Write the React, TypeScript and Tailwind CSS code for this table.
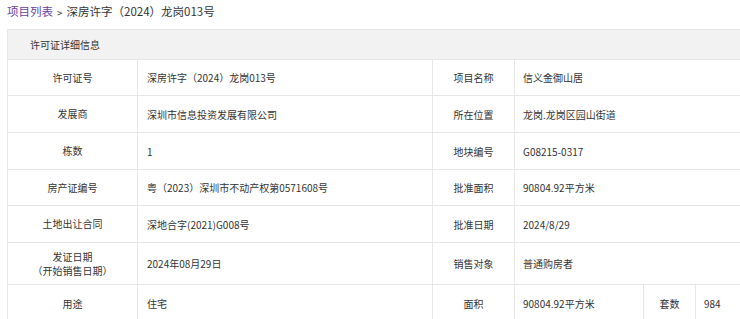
const font = { fontFamily: '"Microsoft YaHei", "Noto Sans CJK SC", "Noto Sans", sans-serif' }

const rows: { label: React.ReactNode; value: string; label2: string; value2: string; h: string }[] = [
  { label: '许可证号', value: '深房许字（2024）龙岗013号', label2: '项目名称', value2: '信义金御山居', h: 'h-[36px]' },
  { label: '发展商', value: '深圳市信息投资发展有限公司', label2: '所在位置', value2: '龙岗.龙岗区园山街道', h: 'h-[37px]' },
  { label: '栋数', value: '1', label2: '地块编号', value2: 'G08215-0317', h: 'h-[37px]' },
  { label: '房产证编号', value: '粤（2023）深圳市不动产权第0571608号', label2: '批准面积', value2: '90804.92平方米', h: 'h-[36px]' },
  { label: '土地出让合同', value: '深地合字(2021)G008号', label2: '批准日期', value2: '2024/8/29', h: 'h-[37px]' },
  {
    label: (
      <>
        发证日期
        <br />
        （开始销售日期）
      </>
    ),
    value: '2024年08月29日',
    label2: '销售对象',
    value2: '普通购房者',
    h: 'h-[42px]',
  },
]

const cell = 'border border-[#e6e6e6] text-[10px] text-[#333]'

export default function App() {
  return (
    <div className="h-[319px] w-[740px] overflow-hidden bg-white" style={font}>
      <div className="flex h-[29px] items-center pl-[7px] pb-[5px] text-[11.5px] text-[#333]">
        <span className="text-[#6b3f9e]">项目列表</span>
        <span className="mx-[4px] text-[10px]">&gt;</span>
        <span>深房许字（2024）龙岗013号</span>
      </div>
      <div className="pl-[7px]">
        <table className="w-[760px] table-fixed border-collapse">
          <colgroup>
            <col className="w-[130px]" />
            <col className="w-[295px]" />
            <col className="w-[82px]" />
            <col className="w-[129px]" />
            <col className="w-[52px]" />
            <col />
          </colgroup>
          <tbody>
            <tr className="h-[30px] bg-[#f2f2f2]">
              <td colSpan={6} className={`${cell} pl-[22px] leading-[14px]`}>
                许可证详细信息
              </td>
            </tr>
            {rows.map((r, i) => (
              <tr key={i} className={r.h}>
                <td className={`${cell} text-center leading-[14px]`}>{r.label}</td>
                <td className={`${cell} pl-[9px]`}>{r.value}</td>
                <td className={`${cell} text-center`}>{r.label2}</td>
                <td colSpan={3} className={`${cell} pl-[8px]`}>
                  {r.value2}
                </td>
              </tr>
            ))}
            <tr className="h-[37px]">
              <td className={`${cell} text-center`}>用途</td>
              <td className={`${cell} pl-[9px]`}>住宅</td>
              <td className={`${cell} text-center`}>面积</td>
              <td className={`${cell} pl-[8px]`}>90804.92平方米</td>
              <td className={`${cell} text-center`}>套数</td>
              <td className={`${cell} pl-[8px]`}>984</td>
            </tr>
          </tbody>
        </table>
      </div>
    </div>
  )
}
